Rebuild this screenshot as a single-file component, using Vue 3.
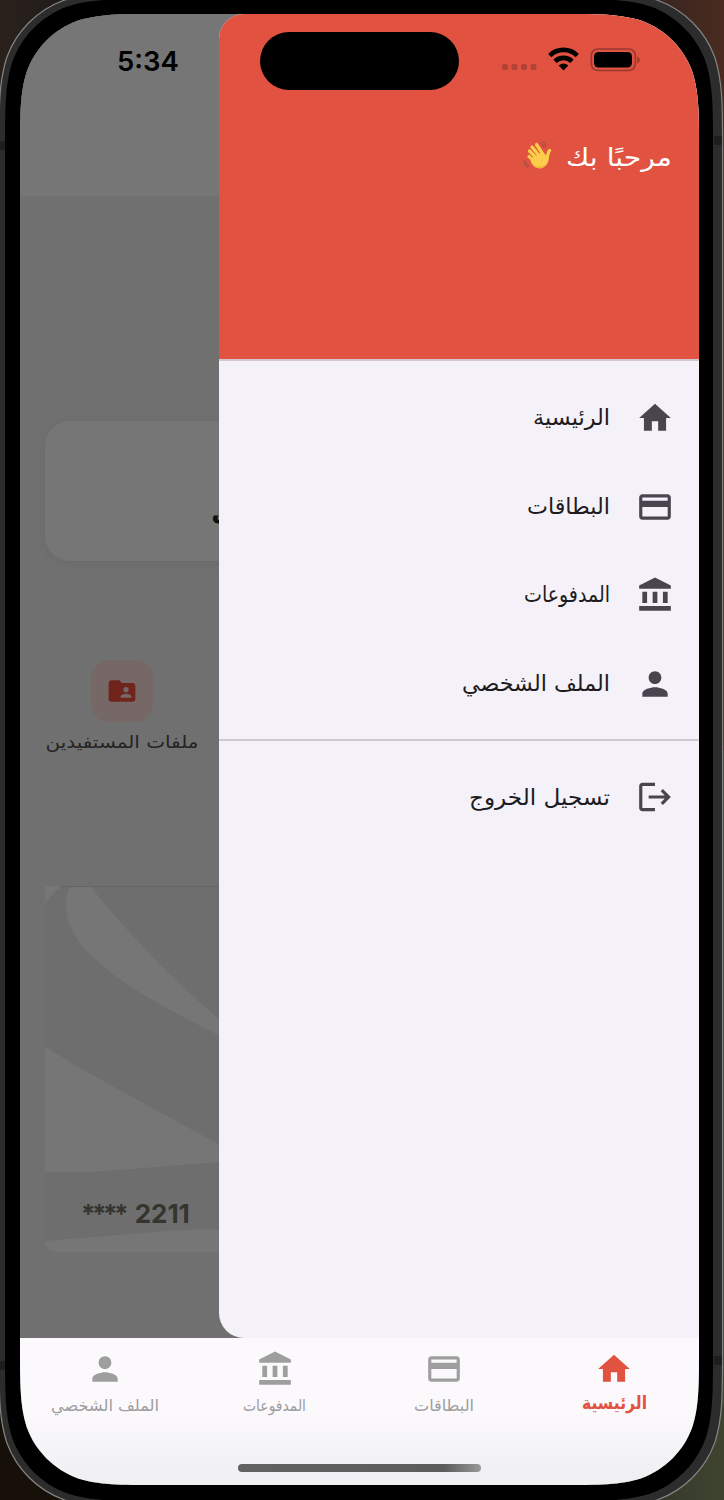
<script setup>
// One continuous-curvature corner, walked from its horizontal to its vertical edge.
const CORNER = [[1.52866, 0], [1.08849, 0], [0.86841, 0], [0.63149, 0.07491], [0.37282, 0.16906], [0.16906, 0.37282], [0.07491, 0.63149], [0, 0.86841], [0, 1.08849], [0, 1.52866]]

function squircle(x, y, w, h, r) {
  const R = x + w
  const B = y + h
  const corners = [
    ([u, v]) => [x + u * r, y + v * r],
    ([u, v]) => [x + v * r, B - u * r],
    ([u, v]) => [R - u * r, B - v * r],
    ([u, v]) => [R - v * r, y + u * r],
  ]
  const parts = corners.map((place, n) => {
    const p = CORNER.map(place).map((q) => q.map((z) => z.toFixed(2)).join(' '))
    return `${n ? 'L' : 'M'}${p[0]}C${p.slice(1).join(' ')}`
  })
  return parts.join('') + 'Z'
}

const outer = squircle(-1, -7.5, 723.6, 1515, 103)
const body = squircle(5, -1, 708, 1502, 99)
const screenClip = { clipPath: `path("${squircle(0, 0, 679, 1471, 91)}")` }

const icons = {
  home: 'M10 20v-6h4v6h5v-8h3L12 3 2 12h3v8z',
  card: 'M20 4H4c-1.11 0-1.99.89-1.99 2L2 18c0 1.11.89 2 2 2h16c1.11 0 2-.89 2-2V6c0-1.11-.89-2-2-2zm0 14H4v-6h16v6zm0-10H4V6h16v2z',
  bank: 'M4 10h3v7H4zM10.500 10h3v7h-3zM2 19h20v3H2zM17 10h3v7h-3zM12 1L2 6v2h20V6z',
  person: 'M12 12c2.210 0 4-1.790 4-4s-1.790-4-4-4-4 1.790-4 4 1.790 4 4 4zm0 2c-2.670 0-8 1.340-8 4v2h16v-2c0-2.660-5.330-4-8-4z',
  logout: 'M17 7l-1.410 1.410L18.170 11H8v2h10.170l-2.580 2.580L17 17l5-5zM4 5h8V3H4c-1.100 0-2 .9-2 2v14c0 1.100.9 2 2 2h8v-2H4V5z',
}
const menu = [
  { icon: 'home', label: 'الرئيسية', w: 77 },
  { icon: 'card', label: 'البطاقات', w: 83 },
  { icon: 'bank', label: 'المدفوعات', w: 86 },
  { icon: 'person', label: 'الملف الشخصي', w: 148 },
]
const tabs = [
  { icon: 'home', label: 'الرئيسية', w: 65, active: true },
  { icon: 'card', label: 'البطاقات', w: 60 },
  { icon: 'bank', label: 'المدفوعات', w: 63 },
  { icon: 'person', label: 'الملف الشخصي', w: 108 },
]
</script>

<template>
  <div class="stage" dir="rtl">
    <svg class="device" viewBox="0 0 724 1500" width="724" height="1500">
      <defs>
        <linearGradient id="wood" x1="0" x2="1"><stop offset="0" stop-color="#2b211b" /><stop offset=".08" stop-color="#201c1a" /><stop offset=".9" stop-color="#352520" /><stop offset="1" stop-color="#4a2b20" /></linearGradient>
        <linearGradient id="moss" x1="0" x2="1"><stop offset="0" stop-color="#171008" /><stop offset=".5" stop-color="#171008" /><stop offset=".9" stop-color="#34382a" /><stop offset="1" stop-color="#3f4430" /></linearGradient>
      </defs>
      <rect width="724" height="750" fill="url(#wood)" />
      <rect y="750" width="724" height="750" fill="url(#moss)" />
      <path :d="outer" fill="#2c2c2c" stroke="#858585" stroke-width="1.2" />
      <path :d="body" fill="#000" />
      <path d="M0 141h5v9H0zM0 1361h5v9H0zM714 136h8v9h-8zM714 1356h8v9h-8z" fill="#1e1e1e" />
    </svg>

    <main class="screen" :style="screenClip">
      <div class="content">
        <div class="page">
          <div class="appbar"></div>
          <section class="hero-card"><span class="hero-text">ل</span></section>
          <section class="shortcut">
            <div class="tile">
              <svg viewBox="0 0 24 24" width="32" height="32"><path fill="#6f241c" d="M20 6h-8l-2-2H4c-1.100 0-1.990.9-1.990 2L2 18c0 1.100.9 2 2 2h16c1.100 0 2-.9 2-2V8c0-1.100-.9-2-2-2zm-5 3c1.100 0 2 .9 2 2s-.9 2-2 2-2-.9-2-2 .9-2 2-2zm4 8h-8v-1c0-1.330 2.670-2 4-2s4 .67 4 2v1z" /></svg>
            </div>
            <svg class="lbl" width="154" height="34"><text x="77" y="26" text-anchor="middle" textLength="153" lengthAdjust="spacingAndGlyphs">ملفات المستفيدين</text></svg>
          </section>
          <section class="bank-card">
            <svg class="art" width="175" height="366" viewBox="0 0 175 366">
              <path d="M0 0H175V366H10Q0 366 0 356Z" fill="#6e6e6e" />
              <path d="M0 0H18Q8 6 0 18ZM25 1H46C80 44 130 96 175 134V150C120 122 80 101 50 73C24 50 15 24 25 1ZM0 160Q20 174 60 196T175 259V276L60 285Q30 287 0 286ZM0 355Q60 350 110 346T175 344V366H10Q0 365 0 355Z" fill="#767676" />
              <path d="M15 .5H175" stroke="#656565" />
            </svg>
            <div class="digits" dir="ltr"><span class="mask">****</span><span>2211</span></div>
          </section>
        </div>

        <aside class="drawer">
          <header class="drawer-head">
            <svg class="wave" viewBox="0 0 30 30" width="30" height="30">
              <g fill="none" stroke-linecap="round">
                <path d="M6.500 10l9 9M9 6l9 11M13.500 3.500l8 12M6 15.500l8 7" stroke="#fbcd4b" stroke-width="3.200" />
                <path d="M26.700 9.500c-2.200 2-1.200 5-3.200 7" stroke="#fbcd4b" stroke-width="3.200" />
                <path d="M8 8.500l8.500 9M11.500 5.500l8 10.500M6.500 13l8 7.500" stroke="#d1912e" stroke-width=".7" />
                <path d="M17.500 2q3 1.500 3.500 4.500M20 1q2.500 1.500 3 4.500M1.200 19.500q1.200 3.500 4.500 5.500M1.300 22.500q1 2.500 3 3.500" stroke="#84504a" stroke-width=".9" />
              </g>
              <path d="M9 17L18 11.500l4 3.500 4-2.500q.5 8-3 12-5 5-11 1.500Q8 23 7.500 19z" fill="#fbcd4b" />
              <path d="M12 25.500q6 2.500 11-1.500" fill="none" stroke="#eeb23a" stroke-width="1.200" />
            </svg>
            <svg class="hello" width="108" height="44"><text x="54" y="28" text-anchor="middle" textLength="106" lengthAdjust="spacingAndGlyphs">مرحبًا بك</text></svg>
          </header>
          <nav class="menu">
            <a v-for="m in menu" :key="m.icon" class="row">
              <svg viewBox="0 0 24 24" width="38" height="38"><path :d="icons[m.icon]" /></svg>
              <svg class="lbl" :width="m.w" height="44"><text :x="m.w / 2" y="29" text-anchor="middle" :textLength="m.w" lengthAdjust="spacingAndGlyphs">{{ m.label }}</text></svg>
            </a>
          </nav>
          <div class="divider"></div>
          <a class="row">
            <svg viewBox="0 0 24 24" width="38" height="38"><path :d="icons.logout" /></svg>
            <svg class="lbl" width="141" height="44"><text x="70.500" y="29.500" text-anchor="middle" textLength="141" lengthAdjust="spacingAndGlyphs">تسجيل الخروج</text></svg>
          </a>
        </aside>
      </div>

      <nav class="tabs">
        <a v-for="t in tabs" :key="t.icon" class="tab" :class="{ active: t.active }">
          <svg viewBox="0 0 24 24" width="38" height="38"><path :d="icons[t.icon]" /></svg>
          <svg class="lbl" :width="t.w" height="30"><text :x="t.w / 2" y="18" text-anchor="middle" :textLength="t.w" lengthAdjust="spacingAndGlyphs">{{ t.label }}</text></svg>
        </a>
      </nav>

      <div class="island"></div>
      <time class="clock">5:34</time>
      <svg class="status" viewBox="0 0 140 30" width="140" height="30">
        <g fill="#b24236"><rect x="2" y="20" width="6" height="6" rx="2" /><rect x="11.500" y="20" width="6" height="6" rx="2" /><rect x="21" y="20" width="6" height="6" rx="2" /><rect x="30.500" y="20" width="6" height="6" rx="2" /></g>
        <g fill="none" stroke="#000" stroke-width="4.600"><path d="M49.800 11.600a19.300 19.300 0 0 1 27.400 0" /><path d="M55 17.400a12 12 0 0 1 17 0" /></g>
        <path d="M58.600 21.500q4.900-4 9.800 0L63.500 26.500z" />
        <rect x="91.300" y="5" width="44" height="21.500" rx="6.500" fill="none" stroke="#973a30" stroke-width="1.600" />
        <rect x="94" y="8" width="38" height="15.500" rx="4.500" />
        <path d="M137.200 12.500q2.600 1 2.600 3.500t-2.600 3.500z" fill="#973a30" />
      </svg>
      <div class="home-bar"></div>
    </main>
  </div>
</template>

<style>
body { margin: 0; }
</style>

<style scoped>
.stage { position: relative; width: 724px; height: 1500px; overflow: hidden; box-sizing: border-box; padding: 14px 25px 15px 20px; font-family: "DejaVu Sans", "Noto Sans", sans-serif; }
.device { position: absolute; left: 0; top: 0; }
.screen { position: relative; display: flex; flex-direction: column; width: 679px; height: 1471px; background: #707070; }
.content { display: flex; height: 1324px; background: #707070; direction: ltr; }
.page { width: 199px; overflow: visible; }
.appbar { width: 230px; height: 182px; background: #767676; }
.hero-card { box-sizing: border-box; width: 230px; height: 140px; margin: 225px 0 0 25px; border-radius: 25px 0 0 25px; background: #767676; box-shadow: 0 2px 12px rgba(0, 0, 0, .05); padding: 73px 0 0 166px; }
.hero-text { display: block; font-size: 27px; line-height: 34px; font-weight: 700; color: #101010; }
.shortcut { display: flex; flex-direction: column; align-items: center; width: 154px; margin: 99px 0 0 25px; }
.tile { display: flex; align-items: center; justify-content: center; width: 62px; height: 62px; border-radius: 18px; background: #756866; }
.shortcut text { font-size: 17px; fill: #242424; }
.bank-card { position: relative; width: 175px; height: 366px; margin: 130px 0 0 25px; }
.art { display: block; }
.digits { position: absolute; left: 36px; top: 312px; display: flex; gap: 9.500px; font: 700 26px/32px Inter, sans-serif; color: #35342f; }
.mask { letter-spacing: -3.500px; }
.drawer { position: relative; width: 480px; border-radius: 25px 0 0 25px; background: #f4f1f9; overflow: hidden; direction: rtl; }
.drawer-head { box-sizing: border-box; display: flex; flex-direction: row-reverse; justify-content: flex-end; gap: 12px; height: 347px; padding: 124px 26px 0 0; background: #e15241; border-bottom: 2px solid #d3c6ce; }
.hello text { font-size: 25px; fill: #fff; }
.wave { margin-top: 3px; }
.menu { padding-top: 13px; }
.row { display: flex; align-items: center; height: 88.600px; padding-right: 25px; gap: 26px; }
.row path { fill: #49454f; }
.row text { font-size: 22px; fill: #1d1b20; }
.lbl, .hello { display: block; overflow: visible; }
.divider { height: 2px; margin: 10.600px 0 12px; background: #cec9d3; }
.tabs { display: flex; height: 147px; background: linear-gradient(#fbf9fc 0 50%, #efeef0); }
.tab { display: flex; flex-direction: column; align-items: center; width: 169.750px; padding-top: 12px; gap: 5px; }
.tab path { fill: #9e9e9e; }
.tab text { font-size: 16px; fill: #9e9e9e; }
.active path, .active text { fill: #e15241; }
.active text { font-size: 18px; font-weight: 700; }
.active { gap: 3px; }
.island { position: absolute; left: 240px; top: 18px; width: 199px; height: 58px; border-radius: 29px; background: #000; }
.clock { position: absolute; left: 97px; top: 30px; font: 600 27.500px/34px Inter, sans-serif; color: #000; }
.status { position: absolute; left: 480px; top: 30px; }
.home-bar { position: absolute; left: 218px; top: 1450px; width: 243px; height: 8px; border-radius: 4px; background: linear-gradient(90deg, #626262, #5c5c5c 85%, #999); }
</style>
